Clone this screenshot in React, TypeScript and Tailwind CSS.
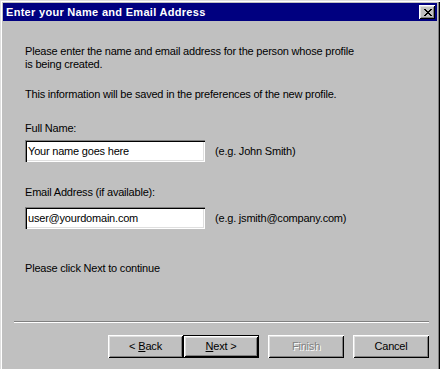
const font = { fontFamily: '"Liberation Sans", Arial, sans-serif' }

function CloseGlyph() {
  const rows = ['XX....XX', '.XX..XX.', '..XXXX..', '...XX...', '..XXXX..', '.XX..XX.', 'XX....XX']
  return (
    <svg width="8" height="7" viewBox="0 0 8 7" shapeRendering="crispEdges">
      {rows.map((r, y) =>
        r.split('').map((c, x) => (c === 'X' ? <rect key={`${x}-${y}`} x={x} y={y} width="1" height="1" fill="#000" /> : null))
      )}
    </svg>
  )
}

function Field({ value, hint }: { value: string; hint: string }) {
  return (
    <div className="flex items-center">
      <div className="w-[180px] h-[22px] bg-white flex items-center pl-[3px] shadow-[inset_1px_1px_0_#808080,inset_2px_2px_0_#000,inset_-1px_-1px_0_#fff,inset_-2px_-2px_0_#dfdfdf]">
        {value}
      </div>
      <span className="ml-[10px]">{hint}</span>
    </div>
  )
}

function Button({ children, def, disabled, w }: { children: React.ReactNode; def?: boolean; disabled?: boolean; w: string }) {
  const bevel = 'shadow-[inset_1px_1px_0_#fff,inset_-1px_-1px_0_#000,inset_2px_2px_0_#dfdfdf,inset_-2px_-2px_0_#808080]'
  return (
    <div className={`${w} h-[23px] ${def ? 'border border-black' : ''}`}>
      <div
        className={`w-full h-full flex items-center justify-center ${bevel} ${
          disabled ? 'text-[#808080] [text-shadow:1px_1px_0_#fff]' : 'text-black'
        }`}
      >
        {children}
      </div>
    </div>
  )
}

export default function App() {
  return (
    <div
      style={font}
      className="w-[440px] h-[369px] bg-[#c0c0c0] flex flex-col p-[3px] pb-0 text-[11px] tracking-[-0.2px] text-black leading-[13px] shadow-[inset_1px_1px_0_#dfdfdf,inset_2px_2px_0_#fff,inset_-1px_0_0_#000,inset_-2px_0_0_#808080]"
    >
      <div className="h-[18px] bg-[#000080] flex items-center justify-between pl-[3px] pr-[2px]">
        <span className="text-white font-bold tracking-[0.3px]">Enter your Name and Email Address</span>
        <div className="w-[16px] h-[14px] bg-[#c0c0c0] flex items-center justify-center pl-[1px] shadow-[inset_1px_1px_0_#fff,inset_-1px_-1px_0_#000,inset_2px_2px_0_#dfdfdf,inset_-2px_-2px_0_#808080]">
          <CloseGlyph />
        </div>
      </div>

      <div className="flex-1 flex flex-col pl-[22px]">
        <p className="mt-[24px]">
          Please enter the name and email address for the person whose profile
          <br />
          is being created.
        </p>
        <p className="mt-[17px]">This information will be saved in the preferences of the new profile.</p>
        <p className="mt-[21px]">Full Name:</p>
        <div className="mt-[5px]">
          <Field value="Your name goes here" hint="(e.g. John Smith)" />
        </div>
        <p className="mt-[24px]">Email Address (if available):</p>
        <div className="mt-[8px]">
          <Field value="user@yourdomain.com" hint="(e.g. jsmith@company.com)" />
        </div>
        <p className="mt-[33px]">Please click Next to continue</p>
      </div>

      <div className="ml-[11px] mr-[8px] h-[2px] border-t border-[#808080] border-b border-b-white box-border" />
      <div className="flex justify-end mt-[12px] mb-[11px] pr-[8px]">
        <Button w="w-[75px]">
          &lt; <span className="underline ml-[3px]">B</span>ack
        </Button>
        <Button w="w-[76px]" def>
          <span className="underline">N</span>ext &gt;
        </Button>
        <div className="w-[9px]" />
        <Button w="w-[76px]" disabled>
          Finish
        </Button>
        <div className="w-[9px]" />
        <Button w="w-[76px]">Cancel</Button>
      </div>
    </div>
  )
}
